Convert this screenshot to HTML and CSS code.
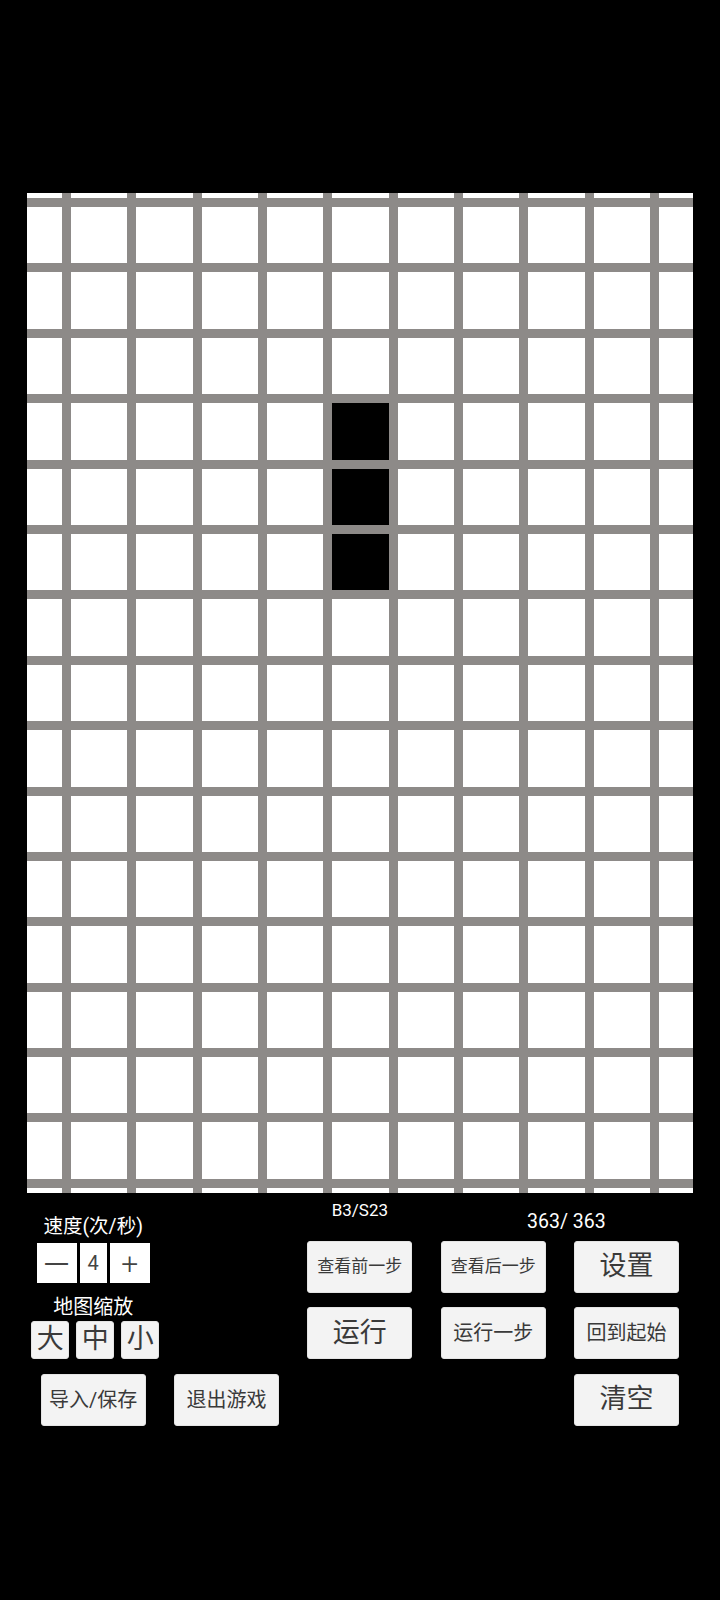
FILE: index.html
```html
<!DOCTYPE html>
<html lang="zh-CN">
<head>
<meta charset="utf-8">
<title>生命游戏</title>
<link rel="stylesheet" href="styles.css">
</head>
<body>
<main class="screen">
  <section class="board">
    <i></i><i></i><i></i><i></i><i></i><i></i><i></i><i></i><i></i><i></i><i></i>
    <i></i><i></i><i></i><i></i><i></i><i></i><i></i><i></i><i></i><i></i><i></i>
    <i></i><i></i><i></i><i></i><i></i><i></i><i></i><i></i><i></i><i></i><i></i>
    <i></i><i></i><i></i><i></i><i></i><i></i><i></i><i></i><i></i><i></i><i></i>
    <i></i><i></i><i></i><i></i><i></i><i class="on"></i><i></i><i></i><i></i><i></i><i></i>
    <i></i><i></i><i></i><i></i><i></i><i class="on"></i><i></i><i></i><i></i><i></i><i></i>
    <i></i><i></i><i></i><i></i><i></i><i class="on"></i><i></i><i></i><i></i><i></i><i></i>
    <i></i><i></i><i></i><i></i><i></i><i></i><i></i><i></i><i></i><i></i><i></i>
    <i></i><i></i><i></i><i></i><i></i><i></i><i></i><i></i><i></i><i></i><i></i>
    <i></i><i></i><i></i><i></i><i></i><i></i><i></i><i></i><i></i><i></i><i></i>
    <i></i><i></i><i></i><i></i><i></i><i></i><i></i><i></i><i></i><i></i><i></i>
    <i></i><i></i><i></i><i></i><i></i><i></i><i></i><i></i><i></i><i></i><i></i>
    <i></i><i></i><i></i><i></i><i></i><i></i><i></i><i></i><i></i><i></i><i></i>
    <i></i><i></i><i></i><i></i><i></i><i></i><i></i><i></i><i></i><i></i><i></i>
    <i></i><i></i><i></i><i></i><i></i><i></i><i></i><i></i><i></i><i></i><i></i>
    <i></i><i></i><i></i><i></i><i></i><i></i><i></i><i></i><i></i><i></i><i></i>
    <i></i><i></i><i></i><i></i><i></i><i></i><i></i><i></i><i></i><i></i><i></i>
  </section>

  <section class="controls">
    <div class="left">
      <div class="label speed-label">速度(次/秒)</div>
      <div class="speed">
        <span class="box wide minus">一</span>
        <span class="box num">4</span>
        <span class="box wide plus">+</span>
      </div>
      <div class="label zoom-label">地图缩放</div>
      <div class="zoom">
        <button class="zbtn">大</button>
        <button class="zbtn">中</button>
        <button class="zbtn">小</button>
      </div>
    </div>

    <div class="rule">B3/S23</div>
    <div class="count">363/ 363</div>

    <button class="btn sm c3 r2">查看前一步</button>
    <button class="btn sm c4 r2">查看后一步</button>
    <button class="btn lg c5 r2">设置</button>

    <button class="btn lg c3 r3">运行</button>
    <button class="btn md c4 r3">运行一步</button>
    <button class="btn md c5 r3">回到起始</button>

    <button class="btn md c1 r4">导入/保存</button>
    <button class="btn md c2 r4">退出游戏</button>
    <button class="btn lg c5 r4">清空</button>
  </section>
</main>
</body>
</html>
```

FILE: styles.css
```css
html, body {
  margin: 0;
  padding: 0;
  background: #000;
}

body {
  width: 720px;
  height: 1600px;
  overflow: hidden;
  font-family: Roboto, "Noto Sans CJK SC", sans-serif;
  color: #fff;
}

.screen {
  display: flex;
  flex-direction: column;
}

/* ---------- board ---------- */
.board {
  margin: 193px 0 0 27px;
  width: 666px;
  height: 1000px;
  background: #8d8a88;
  overflow: hidden;
  display: grid;
  grid-template-columns: 35px repeat(9, 56.33px) 1fr;
  grid-template-rows: 5px repeat(15, 56.4px) 1fr;
  gap: 9px;
}

.board i {
  display: block;
  background: #fff;
}

.board i.on {
  background: #000;
}

/* ---------- controls ---------- */
.controls {
  display: grid;
  grid-template-columns: repeat(5, 105px);
  grid-template-rows: 33px 52px 52px 52px;
  column-gap: 28.33px;
  row-gap: 14.67px;
  padding-left: 40.7px;
}

.left {
  grid-column: 1;
  grid-row: 1 / 4;
  display: flex;
  flex-direction: column;
  align-items: center;
  padding-top: 23px;
}

.label {
  line-height: 22px;
  color: #fff;
  white-space: nowrap;
}

.speed-label {
  font-size: 19.5px;
}

.speed {
  margin-top: 5px;
  display: flex;
  gap: 3.3px;
}

.box {
  height: 40px;
  background: #fff;
  color: #444;
  display: flex;
  align-items: center;
  justify-content: center;
}

.box.wide {
  width: 40px;
}

.box.num {
  width: 26.7px;
  font-size: 20px;
}

.box.minus {
  font-size: 25px;
}

.box.plus {
  font-size: 30px;
  font-weight: 300;
}

.zoom-label {
  margin-top: 12.5px;
  font-size: 20px;
}

.zoom {
  margin-top: 3px;
  margin-left: 4px;
  display: flex;
  gap: 7px;
}

.zbtn {
  width: 38px;
  height: 38.3px;
  padding: 0;
  border: 1px solid #e4e4e4;
  border-radius: 3px;
  background: #f3f3f3;
  color: #3a3a3a;
  font-family: inherit;
  font-size: 27px;
  line-height: 1;
  display: flex;
  align-items: center;
  justify-content: center;
}

.rule {
  grid-column: 3;
  grid-row: 1;
  align-self: start;
  margin-top: 7px;
  text-align: center;
  font-size: 17px;
  line-height: 20px;
}

.count {
  grid-column: 4 / 6;
  grid-row: 1;
  align-self: start;
  margin-top: 17px;
  padding-left: 13px;
  text-align: center;
  font-size: 19.5px;
  line-height: 23px;
}

.btn {
  padding: 0;
  border: 1px solid #e4e4e4;
  border-radius: 3px;
  background: #f3f3f3;
  color: #3a3a3a;
  font-family: inherit;
  line-height: 1;
  display: flex;
  align-items: center;
  justify-content: center;
  white-space: nowrap;
}

.btn.sm { font-size: 17px; }
.btn.md { font-size: 20px; }
.btn.lg { font-size: 27px; }

.c1 { grid-column: 1; }
.c2 { grid-column: 2; }
.c3 { grid-column: 3; }
.c4 { grid-column: 4; }
.c5 { grid-column: 5; }
.r2 { grid-row: 2; }
.r3 { grid-row: 3; }
.r4 { grid-row: 4; }
```
